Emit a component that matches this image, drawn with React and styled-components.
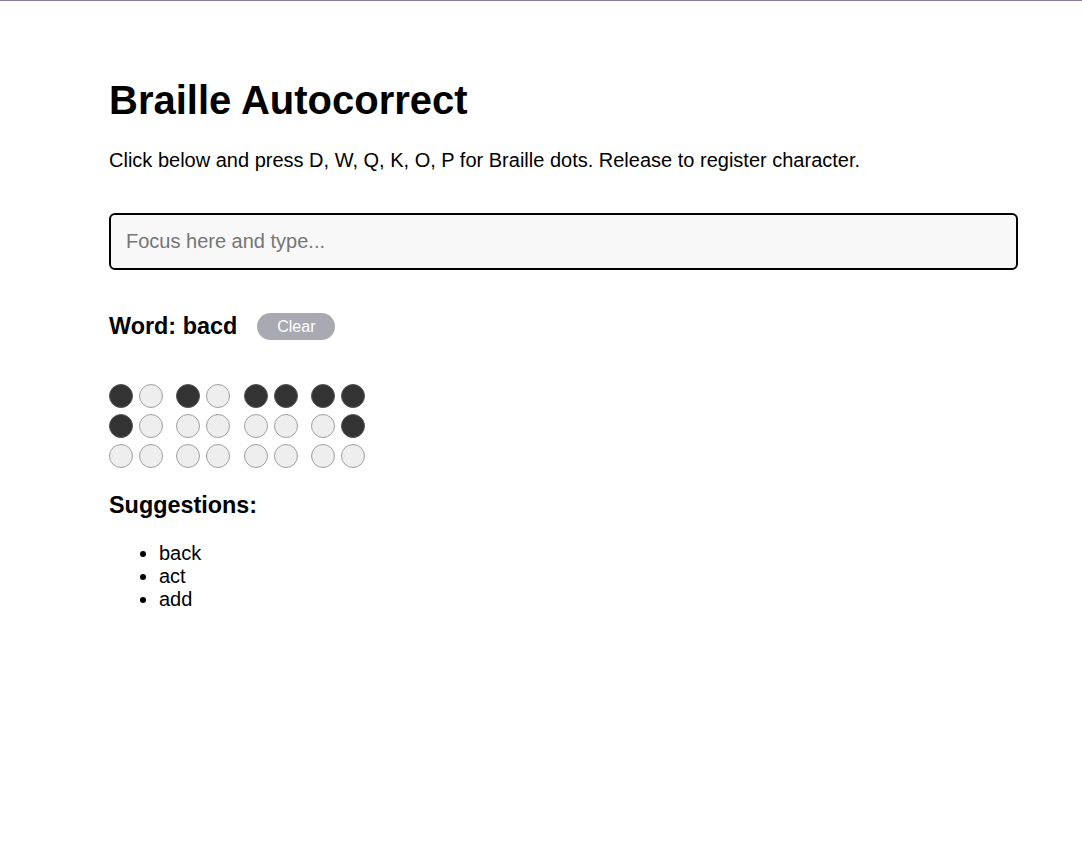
import { useState } from "react";
import styled, { createGlobalStyle } from "styled-components";

const GlobalStyle = createGlobalStyle`
  html, body {
    margin: 0;
    padding: 0;
    background: #ffffff;
  }
  body {
    font-family: "Liberation Sans", Arial, sans-serif;
    font-size: 20px;
    color: #000;
    border-top: 1px solid #8b7ba1;
  }
`;

// dots 1-6 per character, columns left (1,2,3) and right (4,5,6)
const PATTERNS = {
  a: [1],
  b: [1, 2],
  c: [1, 4],
  d: [1, 4, 5],
};

export default function App() {
  const [word, setWord] = useState("bacd");
  const suggestions = ["back", "act", "add"];

  return (
    <>
      <GlobalStyle />
      <Page>
        <Title>Braille Autocorrect</Title>
        <Intro>
          Click below and press D, W, Q, K, O, P for Braille dots. Release to
          register character.
        </Intro>
        <TypeInput placeholder="Focus here and type..." />

        <WordRow>
          <WordHeading>Word: {word}</WordHeading>
          <ClearButton onClick={() => setWord("")}>Clear</ClearButton>
        </WordRow>

        <CellRow>
          {word.split("").map((ch, i) => {
            const on = PATTERNS[ch] || [];
            return (
              <Cell key={i}>
                {[1, 4, 2, 5, 3, 6].map((n) => (
                  <Dot key={n} $filled={on.includes(n)} />
                ))}
              </Cell>
            );
          })}
        </CellRow>

        <SubHeading>Suggestions:</SubHeading>
        <SuggestionList>
          {suggestions.map((s) => (
            <li key={s}>{s}</li>
          ))}
        </SuggestionList>
      </Page>
    </>
  );
}

const Page = styled.main`
  padding: 49px 64px 0 109px;
`;

const Title = styled.h1`
  font-size: 40px;
  font-weight: 700;
  margin: 28px 0 26px;
`;

const Intro = styled.p`
  margin: 0 0 41px;
  line-height: 23px;
`;

const TypeInput = styled.input`
  display: block;
  box-sizing: border-box;
  width: 100%;
  height: 57px;
  padding: 0 15px;
  border: 2px solid #000;
  border-radius: 6px;
  background: #f8f8f8;
  font-family: "Liberation Sans", Arial, sans-serif;
  font-size: 20px;
  color: #000;
  outline: none;

  &::placeholder {
    color: #757575;
  }
`;

const WordRow = styled.div`
  display: flex;
  align-items: center;
  gap: 20px;
  margin-top: 43px;
`;

const WordHeading = styled.h3`
  font-size: 23.4px;
  font-weight: 700;
  margin: 0;
  line-height: 27px;
`;

const ClearButton = styled.button`
  height: 27px;
  padding: 0 20px;
  border: none;
  border-radius: 14px;
  background: #a9a9b1;
  color: #fff;
  font-family: "Liberation Sans", Arial, sans-serif;
  font-size: 16px;
  cursor: pointer;
`;

const CellRow = styled.div`
  display: flex;
  gap: 13.3px;
  margin-top: 44px;
`;

const Cell = styled.div`
  display: grid;
  grid-template-columns: 24px 24px;
  grid-auto-rows: 24px;
  gap: 6px;
`;

const Dot = styled.span`
  box-sizing: border-box;
  width: 24px;
  height: 24px;
  border-radius: 50%;
  border: 1px solid ${(p) => (p.$filled ? "#555" : "#a0a0a0")};
  background: ${(p) => (p.$filled ? "#333" : "#eee")};
`;

const SubHeading = styled.h3`
  font-size: 23.4px;
  font-weight: 700;
  line-height: 27px;
  margin: 24px 0 23px;
`;

const SuggestionList = styled.ul`
  margin: 0;
  padding-left: 50px;
  line-height: 23px;
`;
